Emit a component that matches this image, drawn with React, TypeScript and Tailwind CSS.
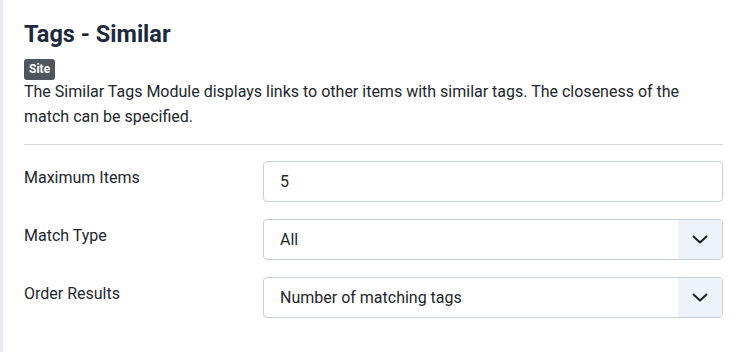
import type { ReactNode } from "react";

function Chevron() {
  return (
    <svg width="16" height="9" viewBox="0 0 16 9" fill="none">
      <path d="M1.5 1.5L8 7.5L14.5 1.5" stroke="#1b1f24" strokeWidth="2" strokeLinecap="round" strokeLinejoin="round" />
    </svg>
  );
}

function Row({ label, children }: { label: string; children: ReactNode }) {
  return (
    <div className="flex items-start">
      <label className="w-[239px] shrink-0 pt-[5px] text-[16px] leading-[24px] text-[#22262e]">{label}</label>
      <div className="flex-1">{children}</div>
    </div>
  );
}

function SelectBox({ value }: { value: string }) {
  return (
    <div className="flex h-[41px] overflow-hidden rounded-[4px] border border-[#c6cdd7] bg-white">
      <div className="flex flex-1 items-center pl-[16px] text-[16px] text-[#22262a]">{value}</div>
      <div className="flex w-[44px] items-center justify-center bg-[#eef2f9]">
        <Chevron />
      </div>
    </div>
  );
}

export default function App() {
  return (
    <div className="flex min-h-[352px] bg-white" style={{ fontFamily: "Roboto, 'Noto Sans', sans-serif" }}>
      <div className="w-[3px] shrink-0 bg-[#e9e9f4]" />
      <div className="flex-1 pl-[21px] pr-[24px] pt-[20px]">
        {/* Header */}
        <h2 className="text-[23.5px] font-bold leading-[1.23] text-[#1e2a3b]">Tags - Similar</h2>
        <span className="mt-[10px] inline-flex h-[21px] items-center rounded-[3px] bg-[#50565d] px-[5px] text-[12px] font-bold text-white">
          Site
        </span>
        <p className="text-[16px] leading-[24.5px] text-[#22262a]">
          The Similar Tags Module displays links to other items with similar tags. The closeness of the match can be specified.
        </p>
        <hr className="mt-[15px] border-t border-[#d3d6da]" />

        {/* Fields */}
        <div className="mt-[16px] flex flex-col gap-[17px]">
          <Row label="Maximum Items">
            <div className="flex h-[41px] items-center rounded-[4px] border border-[#c6cdd7] bg-white pl-[16px] text-[16px] text-[#22262a]">
              5
            </div>
          </Row>
          <Row label="Match Type">
            <SelectBox value="All" />
          </Row>
          <Row label="Order Results">
            <SelectBox value="Number of matching tags" />
          </Row>
        </div>
      </div>
    </div>
  );
}
